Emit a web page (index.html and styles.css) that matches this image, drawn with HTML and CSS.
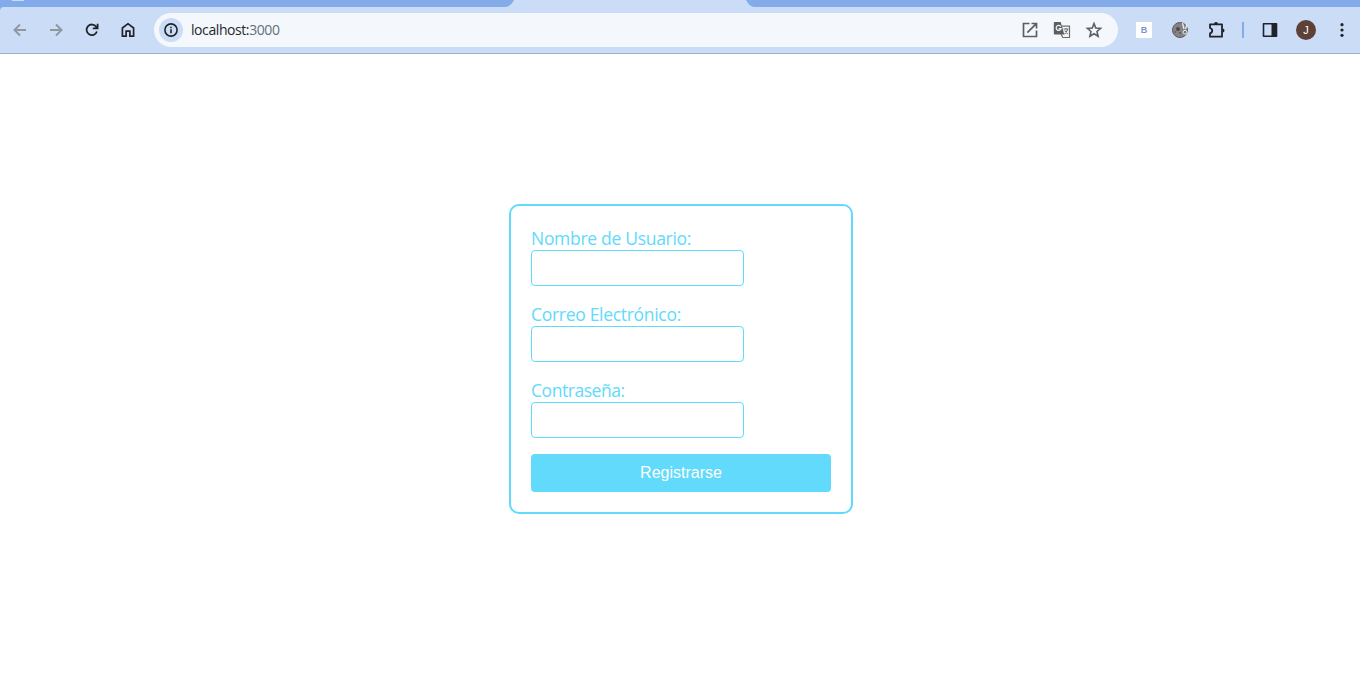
FILE: index.html
```html
<!DOCTYPE html>
<html lang="es">
<head>
<meta charset="utf-8">
<title>Registro</title>
<link rel="stylesheet" href="styles.css">
</head>
<body>
<header class="browser">
  <div class="tabstrip">
    <span class="tab-hint"></span>
    <svg class="active-tab" width="250" height="7" viewBox="0 0 250 7"><path d="M0 7C4 7 6 5 9 0H241C244 5 246 7 250 7Z" fill="#cbdcf6"/></svg>
  </div>
  <div class="toolbar">
    <nav class="nav">
      <span class="slot"><svg width="16" height="16" viewBox="0 0 16 16" fill="none" stroke="#90979f" stroke-width="1.9"><path d="M14 8H3M8 2.500L2.500 8L8 13.500"/></svg></span>
      <span class="slot"><svg width="16" height="16" viewBox="0 0 16 16" fill="none" stroke="#90979f" stroke-width="1.900"><path d="M2 8H13M8 2.500L13.500 8L8 13.500"/></svg></span>
      <span class="slot"><svg width="16" height="16" viewBox="0 0 16 16" fill="none" stroke="#202329" stroke-width="1.800"><path d="M12.900 9.500A5.300 5.300 0 1 1 12.300 4.900L13.500 6.100M13.600 1.800V6.400H8.800"/></svg></span>
      <span class="slot"><svg width="16" height="16" viewBox="0 0 16 16" fill="none" stroke="#202329" stroke-width="1.700"><path d="M2.400 6L8 1.700L13.600 6V14.200H9.900V9.200H6.100V14.200H2.400Z"/></svg></span>
    </nav>
    <div class="address">
      <span class="info"><svg width="16" height="16" viewBox="0 0 16 16"><circle cx="8" cy="8" r="6.100" fill="none" stroke="#202329" stroke-width="1.600"/><path d="M7.200 7.200H8.800V11.300H7.200ZM7.200 4.700H8.800V6.200H7.200Z" fill="#202329"/></svg></span>
      <span class="url">localhost:<span class="port">3000</span></span>
      <span class="action"><svg width="18" height="18" viewBox="0 0 18 18" fill="none" stroke="#5c5e62" stroke-width="1.700"><path d="M8.500 2.500H2.500V15.500H15.500V9.500M10.500 2.500H15.500V7.500M15.300 2.700L6.300 11.700"/></svg></span>
      <span class="action"><svg width="18" height="18" viewBox="0 0 18 18"><path d="M8.500 5.200H16.500V16.500H9.800L8 13" fill="#f4f8fd" stroke="#6c6b69" stroke-width="1.200"/><path d="M1.700 1H7.700L11.300 13.500H1.700Q.800 13.500 .800 12.500V2Q.800 1 1.700 1Z" fill="#5c5e62"/><path d="M7.800 5.600A2.500 2.500 0 1 0 8 7.700H5.700" fill="none" stroke="#f4f8fd" stroke-width="1.200"/><path d="M10.500 8H15.500M13 7V8M14.700 8Q14 11 11.500 13M11.700 9.500L14.700 13" fill="none" stroke="#6c6b69" stroke-width="1.100"/></svg></span>
      <span class="action"><svg width="18" height="18" viewBox="0 0 18 18" fill="none" stroke="#5c5e62" stroke-width="1.600"><path d="M9 2.600L10.800 7L15.600 7.400L12 10.500L13.100 15.200L9 12.700L4.900 15.200L6 10.500L2.400 7.400L7.200 7Z"/></svg></span>
    </div>
    <div class="extensions">
      <span class="slot"><span class="ext-b">B</span></span>
      <span class="slot"><svg width="18" height="18" viewBox="0 0 18 18"><circle cx="9" cy="9" r="7.500" fill="#858383" stroke="#5c5a5b" stroke-width="1"/><circle cx="7" cy="8" r="1.900" fill="#4a4848"/><circle cx="9" cy="12" r="1" fill="#555"/><circle cx="4.300" cy="11" r=".8" fill="#5a5858"/><path d="M11.500 2L13 8M16 3.500L14.500 8" fill="none" stroke="#e8edf5" stroke-width="1.300"/><circle cx="14" cy="11.200" r="1.900" fill="#777" stroke="#e8edf5"/></svg></span>
      <span class="slot"><svg width="18" height="18" viewBox="0 0 18 18"><path d="M3 3.300H15V15.700H3V12.300Q5.200 11.800 5.200 9.700T3 7Z" fill="none" stroke="#202329" stroke-width="1.800" stroke-linejoin="round"/><path d="M7 3A2 2 0 0 1 11 3ZM15.500 7.500A2 2 0 0 1 15.500 11.500Z" fill="#202329"/></svg></span>
      <span class="divider"></span>
      <span class="slot"><svg width="16" height="16" viewBox="0 0 16 16"><path d="M1.500 1.800H14.500V14.200H1.500Z" fill="none" stroke="#202329" stroke-width="1.600" stroke-linejoin="round"/><path d="M9.500 2H14.500V14H9.500Z" fill="#202329"/></svg></span>
      <span class="slot"><span class="avatar">J</span></span>
      <span class="slot"><svg width="16" height="16" viewBox="0 0 16 16" fill="#202329"><circle cx="8" cy="2.700" r="1.600"/><circle cx="8" cy="8" r="1.600"/><circle cx="8" cy="13.300" r="1.600"/></svg></span>
    </div>
  </div>
</header>
<main class="page">
  <form class="card">
    <div class="field"><label class="label label-user" for="user">Nombre de Usuario:</label><input class="input" id="user" type="text"></div>
    <div class="field"><label class="label label-mail" for="mail">Correo Electrónico:</label><input class="input" id="mail" type="email"></div>
    <div class="field"><label class="label label-pass" for="pass">Contraseña:</label><input class="input" id="pass" type="password"></div>
    <button class="submit" type="button">Registrarse</button>
  </form>
</main>
</body>
</html>
```
FILE: styles.css
```css
* { box-sizing: border-box; }
body {
  margin: 0;
  height: 675px;
  display: flex;
  flex-direction: column;
  overflow: hidden;
  background: #fff;
  font-family: "Open Sans", "Noto Sans", sans-serif;
}
svg { display: block; }
.browser { flex: none; background: #83abe9; }
.tabstrip {
  height: 7px;
  display: flex;
  align-items: flex-start;
}
.tab-hint { width: 12px; height: 1px; margin-left: 12px; background: #cbdcf6; }
.active-tab { margin-left: 481px; }
.toolbar {
  height: 47px;
  display: flex;
  align-items: center;
  padding-left: 2px;
  background: #cbdcf6;
  border-bottom: 1px solid #a0b0cc;
  border-top-left-radius: 4px;
}
.nav, .extensions { display: flex; align-items: center; }
.slot { width: 36px; height: 36px; display: flex; align-items: center; justify-content: center; }
.address {
  flex: 1;
  height: 34px;
  margin: 0 8px;
  padding: 0 8px 0 5px;
  display: flex;
  align-items: center;
  border-radius: 17px;
  background: #f4f8fd;
}
.info {
  width: 24px;
  height: 24px;
  display: flex;
  align-items: center;
  justify-content: center;
  border-radius: 50%;
  background: #cbdcf6;
}
.url { flex: 1; margin-left: 8px; font-size: 14px; line-height: 20px; letter-spacing: -0.42px; color: #25282d; }
.port { color: #62707a; }
.action { width: 32px; display: flex; justify-content: center; }
.ext-b {
  width: 16px;
  height: 16px;
  background: #fff;
  color: #7596c8;
  font: bold 9px/16px "Liberation Sans", sans-serif;
  text-align: center;
}
.divider { width: 2px; height: 16px; margin: 0 8px; background: #83abe9; }
.avatar {
  width: 20px;
  height: 20px;
  border-radius: 50%;
  background: #5d4037;
  color: #fff;
  font: 11px/20px "Liberation Sans", sans-serif;
  text-align: center;
}
.page { flex: 1; display: flex; justify-content: center; align-items: flex-start; padding: 150px 0 0 2px; }
.card {
  width: 344px;
  padding: 20px;
  display: flex;
  flex-direction: column;
  gap: 16px;
  border: 2px solid #61dafb;
  border-radius: 10px;
}
.field { display: flex; flex-direction: column; align-items: flex-start; }
.label { height: 24px; font-size: 17.5px; font-weight: 450; line-height: 25px; color: #61dafb; white-space: nowrap; }
.label-user { letter-spacing: -0.3px; }
.label-mail { letter-spacing: -0.3px; }
.label-pass { letter-spacing: -0.45px; }
.input { width: 213px; height: 36px; border: 1px solid #61dafb; border-radius: 4px; background: #fff; outline: none; }
.submit {
  height: 38px;
  padding: 0;
  border: 0;
  border-radius: 4px;
  background: #61dafb;
  color: #fff;
  font: 16px/36px "Liberation Sans", Arial, sans-serif;
}
```
